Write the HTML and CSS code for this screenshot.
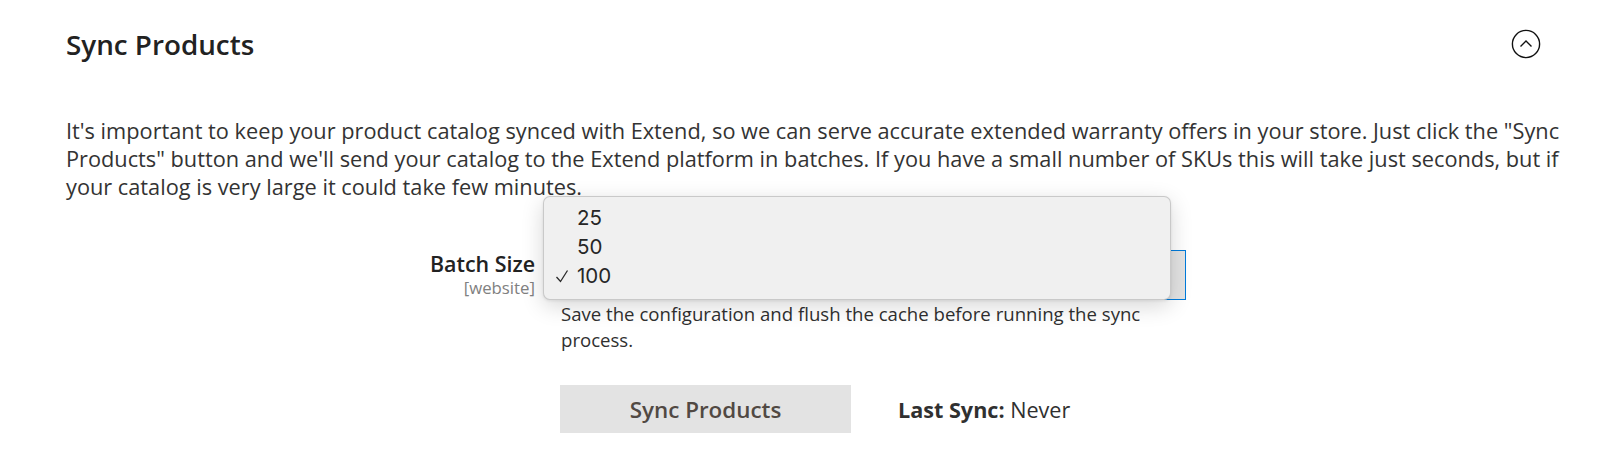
FILE: index.html
```html
<!DOCTYPE html>
<html lang="en">
<head>
<meta charset="utf-8">
<title>Sync Products</title>
<link rel="stylesheet" href="styles.css">
</head>
<body>
<section class="section">
  <header class="section-head">
    <h2 class="section-title">Sync Products</h2>
    <span class="collapse-icon" aria-label="Collapse">
      <svg width="30" height="30" viewBox="0 0 30 30">
        <circle cx="15" cy="15" r="13.6" fill="none" stroke="#111" stroke-width="1.4"/>
        <polyline points="9.5,17.5 15,12 20.5,17.5" fill="none" stroke="#111" stroke-width="1.4" stroke-linejoin="miter"/>
      </svg>
    </span>
  </header>
  <p class="intro">It's important to keep your product catalog synced with Extend, so we can serve accurate extended warranty offers in your store. Just click the "Sync Products" button and we'll send your catalog to the Extend platform in batches. If you have a small number of SKUs this will take just seconds, but if your catalog is very large it could take few minutes.</p>

  <div class="field-row">
    <div class="field-label">
      <span class="label-text">Batch Size</span>
      <span class="scope">[website]</span>
    </div>
    <div class="field-control">
      <div class="select">
        <span class="select-value">100</span>
        <span class="select-arrow"></span>
      </div>
      <ul class="popup">
        <li class="option">25</li>
        <li class="option">50</li>
        <li class="option selected">
          <svg class="check" width="14" height="14" viewBox="0 0 14 14"><polyline points="1.5,8 5.5,12.5 12.5,1.5" fill="none" stroke="#2a2a2a" stroke-width="1.3"/></svg>100
        </li>
      </ul>
      <p class="note">Save the configuration and flush the cache before running the sync process.</p>
    </div>
  </div>

  <div class="action-row">
    <button class="sync-btn" type="button">Sync Products</button>
    <span class="last-sync"><b>Last Sync:</b> Never</span>
  </div>
</section>
</body>
</html>
```
FILE: styles.css
```css
* { box-sizing: border-box; }
html, body { margin: 0; padding: 0; background: #fff; }
body {
  font-family: "Open Sans", "Liberation Sans", sans-serif;
  color: #333;
  width: 1600px;
  height: 468px;
  overflow: hidden;
}
.section {
  padding: 26px 24px 0 66px;
}
.section-head {
  display: flex;
  justify-content: space-between;
  align-items: center;
  height: 36px;
  padding-right: 35px;
}
.section-title {
  margin: 0;
  font-size: 27.8px;
  font-weight: 600;
  line-height: 36px;
  color: #222;
}
.collapse-icon {
  display: flex;
  width: 30px;
  height: 30px;
}
.intro {
  margin: 55px 0 0 0;
  font-size: 21.75px;
  line-height: 27.8px;
  color: #333;
}
.field-row {
  display: grid;
  grid-template-columns: 469px 625px;
  column-gap: 26px;
  margin-top: 50px;
}
.field-label {
  display: flex;
  flex-direction: column;
  align-items: flex-end;
  text-align: right;
}
.label-text {
  font-size: 21.4px;
  font-weight: 600;
  line-height: 27px;
  color: #222;
}
.scope {
  font-size: 16.8px;
  line-height: 22px;
  color: #808080;
}
.field-control {
  position: relative;
}
.select {
  display: flex;
  height: 50px;
  border: 1px solid #007bdb;
  background: #fff;
}
.select-value {
  flex: 1;
  padding: 0 14px;
  font-size: 21px;
  line-height: 48px;
  color: #303030;
}
.select-arrow {
  width: 52px;
  background: #e3e3e3;
  border-left: 1px solid #adadad;
}
.popup {
  position: absolute;
  left: -18px;
  top: -54px;
  width: 628px;
  margin: 0;
  padding: 6px 0 9px 0;
  list-style: none;
  background: #f0f0f0;
  border: 1px solid rgba(0, 0, 0, 0.16);
  border-radius: 7px;
  box-shadow: 0 6px 22px rgba(0, 0, 0, 0.16), 0 1px 3px rgba(0, 0, 0, 0.08);
  font-family: "Inter", "Roboto", "Liberation Sans", sans-serif;
}
.option {
  position: relative;
  height: 29px;
  padding-left: 33px;
  font-size: 20.5px;
  line-height: 29px;
  color: #262626;
}
.check {
  position: absolute;
  left: 11px;
  top: 8px;
}
.note {
  margin: 1px 0 0 0;
  font-size: 18.6px;
  line-height: 26px;
  color: #303030;
  padding-right: 40px;
}
.action-row {
  display: flex;
  align-items: center;
  gap: 47px;
  margin: 32px 0 0 494px;
}
.sync-btn {
  width: 291px;
  height: 48px;
  border: 0;
  background: #e3e3e3;
  font-family: "Open Sans", "Liberation Sans", sans-serif;
  font-size: 22.4px;
  font-weight: 600;
  color: #514943;
  padding: 0;
}
.last-sync {
  font-size: 21.6px;
  color: #303030;
}
.last-sync b {
  font-weight: 700;
}
```
